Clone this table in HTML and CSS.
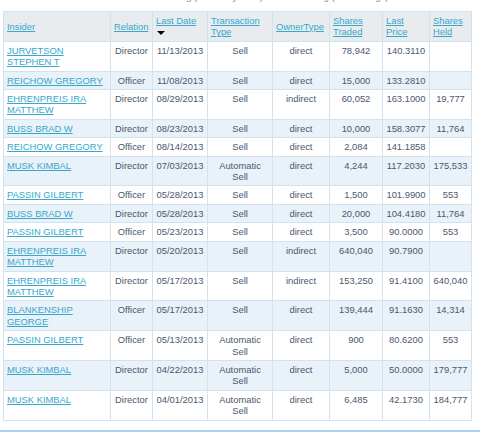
FILE: index.html
```html
<!DOCTYPE html>
<html>
<head>
<meta charset="utf-8">
<link rel="stylesheet" href="styles.css">
</head>
<body>
<div class="page">
  <div class="toptext"><span>Trading (Sorted by Date)</span><span>Showing (1 - 15 filings)</span></div>
  <table class="trades">
    <colgroup>
      <col class="c-ins"><col class="c-rel"><col class="c-date"><col class="c-type"><col class="c-own"><col class="c-trd"><col class="c-price"><col class="c-held">
    </colgroup>
    <thead>
      <tr>
        <th><a href="#">Insider</a></th>
        <th><a href="#">Relation</a></th>
        <th><a href="#">Last Date</a><br><span class="arrow"></span></th>
        <th><a href="#">Transaction Type</a></th>
        <th><a href="#">OwnerType</a></th>
        <th><a href="#">Shares Traded</a></th>
        <th><a href="#">Last Price</a></th>
        <th><a href="#">Shares Held</a></th>
      </tr>
    </thead>
    <tbody>
      <tr><td class="ins"><a href="#">JURVETSON STEPHEN T</a></td><td>Director</td><td>11/13/2013</td><td>Sell</td><td>direct</td><td>78,942</td><td>140.3110</td><td></td></tr>
      <tr><td class="ins"><a href="#">REICHOW GREGORY</a></td><td>Officer</td><td>11/08/2013</td><td>Sell</td><td>direct</td><td>15,000</td><td>133.2810</td><td></td></tr>
      <tr><td class="ins"><a href="#">EHRENPREIS IRA MATTHEW</a></td><td>Director</td><td>08/29/2013</td><td>Sell</td><td>indirect</td><td>60,052</td><td>163.1000</td><td>19,777</td></tr>
      <tr><td class="ins"><a href="#">BUSS BRAD W</a></td><td>Director</td><td>08/23/2013</td><td>Sell</td><td>direct</td><td>10,000</td><td>158.3077</td><td>11,764</td></tr>
      <tr><td class="ins"><a href="#">REICHOW GREGORY</a></td><td>Officer</td><td>08/14/2013</td><td>Sell</td><td>direct</td><td>2,084</td><td>141.1858</td><td></td></tr>
      <tr><td class="ins"><a href="#">MUSK KIMBAL</a></td><td>Director</td><td>07/03/2013</td><td>Automatic Sell</td><td>direct</td><td>4,244</td><td>117.2030</td><td>175,533</td></tr>
      <tr><td class="ins"><a href="#">PASSIN GILBERT</a></td><td>Officer</td><td>05/28/2013</td><td>Sell</td><td>direct</td><td>1,500</td><td>101.9900</td><td>553</td></tr>
      <tr><td class="ins"><a href="#">BUSS BRAD W</a></td><td>Director</td><td>05/28/2013</td><td>Sell</td><td>direct</td><td>20,000</td><td>104.4180</td><td>11,764</td></tr>
      <tr><td class="ins"><a href="#">PASSIN GILBERT</a></td><td>Officer</td><td>05/23/2013</td><td>Sell</td><td>direct</td><td>3,500</td><td>90.0000</td><td>553</td></tr>
      <tr><td class="ins"><a href="#">EHRENPREIS IRA MATTHEW</a></td><td>Director</td><td>05/20/2013</td><td>Sell</td><td>indirect</td><td>640,040</td><td>90.7900</td><td></td></tr>
      <tr><td class="ins"><a href="#">EHRENPREIS IRA MATTHEW</a></td><td>Director</td><td>05/17/2013</td><td>Sell</td><td>indirect</td><td>153,250</td><td>91.4100</td><td>640,040</td></tr>
      <tr><td class="ins"><a href="#">BLANKENSHIP GEORGE</a></td><td>Officer</td><td>05/17/2013</td><td>Sell</td><td>direct</td><td>139,444</td><td>91.1630</td><td>14,314</td></tr>
      <tr><td class="ins"><a href="#">PASSIN GILBERT</a></td><td>Officer</td><td>05/13/2013</td><td>Automatic Sell</td><td>direct</td><td>900</td><td>80.6200</td><td>553</td></tr>
      <tr><td class="ins"><a href="#">MUSK KIMBAL</a></td><td>Director</td><td>04/22/2013</td><td>Automatic Sell</td><td>direct</td><td>5,000</td><td>50.0000</td><td>179,777</td></tr>
      <tr><td class="ins"><a href="#">MUSK KIMBAL</a></td><td>Director</td><td>04/01/2013</td><td>Automatic Sell</td><td>direct</td><td>6,485</td><td>42.1730</td><td>184,777</td></tr>
    </tbody>
  </table>
  <div class="rule"></div>
</div>
</body>
</html>
```
FILE: styles.css
```css
html, body {
  margin: 0;
  padding: 0;
  background: #ffffff;
}
.page {
  width: 480px;
  font-family: "Liberation Sans", Arial, sans-serif;
  font-size: 9.4px;
  line-height: 11.4px;
  color: #4a586e;
}
.toptext {
  height: 11px;
  overflow: hidden;
  display: flex;
  gap: 30px;
  padding-left: 160px;
  white-space: nowrap;
  color: #7a8390;
}
.toptext span {
  margin-top: -9px;
}
.trades {
  margin-left: 3px;
  width: 468px;
  table-layout: fixed;
  border-collapse: collapse;
  border: 1px solid #d2e2f0;
}
.c-ins { width: 107px; }
.c-rel { width: 42px; }
.c-date { width: 55px; }
.c-type { width: 65px; }
.c-own { width: 57px; }
.c-trd { width: 53px; }
.c-price { width: 47px; }
.c-held { width: 42px; }
.trades th, .trades td {
  border: 1px solid #d2e2f0;
  padding: 3px 3px;
}
.trades th {
  background: #e9ecee;
  font-weight: normal;
  text-align: left;
  vertical-align: middle;
}
.trades td {
  text-align: center;
  vertical-align: top;
}
.trades td.ins {
  text-align: left;
}
.trades a {
  color: #36a8cc;
  text-decoration: underline;
}
.trades tbody tr:nth-child(even) td {
  background: #e9f1f9;
}
.trades tbody tr:nth-child(odd) td {
  background: #ffffff;
}
.arrow {
  display: inline-block;
  width: 0;
  height: 0;
  border-left: 4px solid transparent;
  border-right: 4px solid transparent;
  border-top: 4px solid #000000;
  margin-left: 1px;
  vertical-align: middle;
}
.rule {
  margin-top: 9px;
  border-top: 2px solid #a9d4ee;
}
```
